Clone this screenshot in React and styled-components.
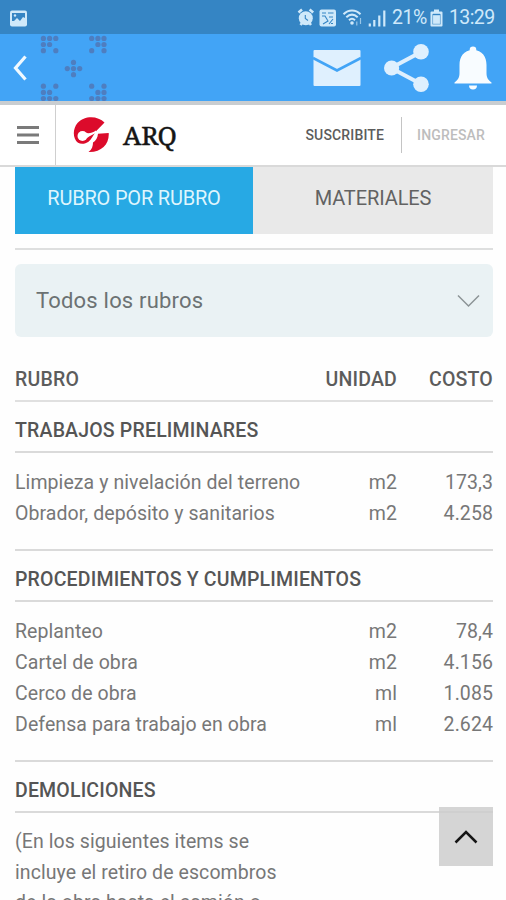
import React from "react";
import styled, { createGlobalStyle } from "styled-components";

const GlobalStyle = createGlobalStyle`
  *, *::before, *::after { box-sizing: border-box; }
  html, body { margin: 0; padding: 0; background: #fefefe; overflow: hidden; }
  body { font-family: Roboto, "Liberation Sans", sans-serif; }
  svg { display: block; flex: none; }
  button { border: 0; padding: 0; background: none; font: inherit; color: inherit; }
`;

const Screen = styled.div`
  position: relative;
  width: 506px;
  height: 900px;
  overflow: hidden;
  display: flex;
  flex-direction: column;
  background: #fefefe;
`;

const StatusBar = styled.div`
  flex: none;
  height: 34px;
  padding: 2px 11px 0 9px;
  display: flex;
  align-items: center;
  justify-content: space-between;
  background: #3585c4;
  color: #cfe9fa;
`;

const StatusGroup = styled.div`
  display: flex;
  align-items: center;
`;

const StatusText = styled.span`
  width: ${(p) => p.$width}px;
  margin-left: ${(p) => p.$gap}px;
  font-size: 19.5px;
  line-height: 30px;
  white-space: nowrap;
  letter-spacing: ${(p) => p.$spacing}px;
`;

const AppBar = styled.header`
  flex: none;
  height: 71px;
  border-bottom: 4px solid #c9cdd0;
  display: flex;
  justify-content: space-between;
  background: #42a4f6;
`;

const AppBarActions = styled.div`
  display: flex;
  align-items: center;
  gap: 23px;
  padding-right: 14px;
`;

const SiteHeader = styled.div`
  flex: none;
  height: 62px;
  padding-right: 21px;
  display: flex;
  align-items: center;
  border-bottom: 2px solid #d9d9d9;
  background: #fff;
`;

const MenuButton = styled.button`
  width: 56px;
  height: 60px;
  padding-left: 17px;
  border-right: 1px solid #cfcfcf;
`;

const Brand = styled.div`
  display: flex;
  align-items: center;
  flex: 1;
  padding-left: 17px;
`;

const BrandName = styled.span`
  margin: -1px 0 0 14px;
  font-family: "Noto Serif", "DejaVu Serif Condensed", "Liberation Serif", serif;
  font-size: 26px;
  font-weight: 400;
  letter-spacing: -0.2px;
  color: #151515;
  -webkit-text-stroke: 0.5px #151515;
`;

const HeaderLink = styled.a`
  font-size: 14px;
  font-weight: 500;
  letter-spacing: 0.15px;
  color: ${(p) => (p.$muted ? "#bdbdbd" : "#5c5c5c")};
`;

const HeaderDivider = styled.span`
  width: 1px;
  height: 36px;
  margin: 0 15px 0 17px;
  background: #c4c4c4;
`;

const Content = styled.main`
  flex: none;
  padding: 0 13px 0 15px;
`;

const Tabs = styled.div`
  display: grid;
  grid-template-columns: 238px 240px;
  height: 67px;
`;

const Tab = styled.button`
  padding-bottom: 5px;
  font-size: 20px;
  letter-spacing: ${(p) => p.$spacing}px;
  text-align: center;
  color: ${(p) => (p.$active ? "#dff5fd" : "#626262")};
  background: ${(p) => (p.$active ? "#27a9e4" : "#e9e9e9")};
`;

const Rule = styled.hr`
  height: 2px;
  margin: 14px 0;
  border: 0;
  background: #dedfdf;
`;

const SelectBox = styled.div`
  height: 73px;
  padding: 0 13px 0 21px;
  border-radius: 6px;
  display: flex;
  align-items: center;
  justify-content: space-between;
  background: #eaf2f4;
  color: #6c7273;
  font-size: 22px;
  letter-spacing: 0.2px;
`;

const Row = styled.div`
  display: grid;
  grid-template-columns: 290px 92px 96px;
  line-height: 31px;
`;

const HeadRow = styled(Row)`
  height: 65px;
  padding-top: 27px;
  border-bottom: 2px solid #e0e0e0;
  font-size: 19.5px;
  font-weight: 500;
  color: #5c5c5c;
  letter-spacing: 0.2px;
`;

const Cell = styled.span`
  white-space: nowrap;
  text-align: ${(p) => (p.$end ? "right" : "left")};
`;

const SectionTitle = styled.h2`
  height: 51px;
  margin: 0;
  padding-top: 13px;
  border-bottom: 2px solid #dadada;
  line-height: 31px;
  font-size: 19.5px;
  font-weight: 500;
  color: #555;
  letter-spacing: 0.18px;
`;

const SectionBody = styled.div`
  padding: 14px 0 20px;
  border-bottom: 2px solid #dadada;
  color: #777;
  font-size: 19.5px;
  letter-spacing: 0.08px;
`;

const Note = styled.p`
  margin: 0;
  padding-top: 14px;
  color: #777;
  font-size: 19.5px;
  line-height: 30.7px;
  letter-spacing: 0.08px;
`;

const NoteLine = styled.span`
  display: block;
`;

const ToTop = styled.button`
  position: absolute;
  right: 13px;
  bottom: 34px;
  width: 54px;
  height: 59px;
  display: flex;
  align-items: center;
  justify-content: center;
  background: rgba(205, 205, 205, 0.84);
`;

const sections = [
  {
    title: "TRABAJOS PRELIMINARES",
    rows: [
      ["Limpieza y nivelación del terreno", "m2", "173,3"],
      ["Obrador, depósito y sanitarios", "m2", "4.258"],
    ],
  },
  {
    title: "PROCEDIMIENTOS Y CUMPLIMIENTOS",
    rows: [
      ["Replanteo", "m2", "78,4"],
      ["Cartel de obra", "m2", "4.156"],
      ["Cerco de obra", "ml", "1.085"],
      ["Defensa para trabajo en obra", "ml", "2.624"],
    ],
  },
];

const dots = [
  [43.4, 38.4], [49.6, 38.4], [55.8, 38.4], [43.4, 44.5], [49.6, 44.5], [43.4, 50.7], [55.8, 50.7],
  [91.7, 38.4], [97.9, 38.4], [104, 38.4], [97.9, 44.5], [104, 44.5], [91.7, 50.7], [104, 50.7],
  [73.5, 62.4], [67.3, 68.6], [73.5, 68.6], [79.7, 68.6], [73.5, 74.7],
  [43.4, 86.2], [55.8, 86.2], [43.4, 92.4], [49.6, 92.4], [43.4, 98.5], [49.6, 98.5], [55.8, 98.5],
  [91.7, 86.2], [104, 86.2], [97.9, 92.4], [104, 92.4], [91.7, 98.5], [97.9, 98.5], [104, 98.5],
];

const GalleryIcon = () => (
  <svg width="19" height="17" viewBox="0 0 19 17">
    <rect x="1" y="0.5" width="17" height="16" rx="2" fill="#cfe9fa" />
    <path d="M3 3H16V8L14 7L11 11L8 8L5 11H3Z" fill="#3585c4" />
    <circle cx="6" cy="5.5" r="1.2" fill="#cfe9fa" />
  </svg>
);

const StatusIcons = () => (
  <svg width="90" height="20" viewBox="297 8 90 20" fill="none" stroke="#cfe9fa">
    <circle cx="305.8" cy="18.2" r="7" fill="#cfe9fa" stroke="none" />
    <path d="M298.5 12.5L302 9.5M309.6 9.5L313.2 12.5M300.5 25L302.5 22.5M311 25L309 22.5" strokeWidth="2.6" />
    <path d="M305.3 15V18.5L308 20.5" stroke="#3585c4" strokeWidth="1.1" />
    <rect x="319.5" y="9.5" width="16.5" height="17" rx="2" fill="#cfe9fa" stroke="none" />
    <path d="M322 13H326M328 13H333.5M322 16H325L328 21L323 24M329 17H333M333 19L329 24M333 23.5H331" stroke="#3585c4" strokeWidth="1.1" />
    <path d="M343.5 14.2C348.5 9.2 355.5 9.2 360.5 14.2M346.3 17.2C350 13.8 354 13.8 357.7 17.2M349 20.2C351 18.3 353 18.3 355 20.2" strokeWidth="2" />
    <circle cx="352" cy="23" r="1.8" fill="#cfe9fa" stroke="none" />
    <path d="M356.8 21.5V25.5M360.5 18V24" strokeWidth="1.2" opacity="0.65" />
    <path d="M369.8 23.5V26.5M374.3 20V26.5M379.3 15.5V26.5M384.3 10.5V26.5" strokeWidth="2.2" />
  </svg>
);

const BatteryIcon = () => (
  <svg width="13" height="18" viewBox="0 0 13 18">
    <path d="M4 0.5H9V2.5H11.5Q12.5 2.5 12.5 3.5V16.5Q12.5 17.5 11.5 17.5H1.5Q0.5 17.5 0.5 16.5V3.5Q0.5 2.5 1.5 2.5H4Z" fill="#cfe9fa" />
    <path d="M3 4.8H10V6.2H3Z" fill="#3585c4" />
    <path d="M2.6 5V15.2H10.4V5" fill="none" stroke="#3585c4" strokeWidth="0.9" opacity="0.6" />
  </svg>
);

const BackAndPattern = () => (
  <svg width="110" height="67" viewBox="0 34 110 67">
    <path d="M25.5 56.5L15.5 68L25.5 79.5" fill="none" stroke="#f0f9ff" strokeWidth="3.2" />
    <g fill="#5a5a8c" opacity="0.5">
      {dots.map(([x, y]) => (
        <circle key={`${x}-${y}`} cx={x} cy={y} r="2.6" />
      ))}
    </g>
  </svg>
);

const MailIcon = () => (
  <svg width="48" height="38" viewBox="0 0 48 38">
    <rect x="0.5" y="1" width="47" height="36" rx="1" fill="#dff0fe" />
    <path d="M0 9L24 21.5L48 9" fill="none" stroke="#42a4f6" strokeWidth="2.8" />
  </svg>
);

const ShareIcon = () => (
  <svg width="47" height="50" viewBox="2 0 47 50">
    <path d="M39 9L9 25L39 41" fill="none" stroke="#dff0fe" strokeWidth="4" />
    <g fill="#dff0fe">
      <circle cx="39" cy="8.8" r="7.8" />
      <circle cx="9.6" cy="25" r="7.6" />
      <circle cx="39" cy="41.2" r="7.8" />
    </g>
  </svg>
);

const BellIcon = () => (
  <svg width="38" height="44" viewBox="0 0 38 44" fill="#f8fcff">
    <circle cx="19" cy="3.8" r="3.3" />
    <path d="M19 4C9.5 4 5.5 11 5.5 19V27C5.5 31.5 4 34 0.5 36.5V37.5H37.5V36.5C34 34 32.5 31.5 32.5 27V19C32.5 11 28.5 4 19 4Z" />
    <path d="M15 39.5H23C23 42 21.5 43.5 19 43.5S15 42 15 39.5Z" />
  </svg>
);

const BrandLogo = () => (
  <svg width="36" height="36" viewBox="73 117 36 36">
    <path
      d="M78 142.8C72.5 138.5 72.5 129 77.5 123C84.500 115 98 115.500 104.500 122.500C101 126.500 97.500 129.500 95.500 132C93 135.500 91.500 139.500 88.500 141.800C85.500 144 81 144.500 78 142.800Z"
      fill="#dc0b2b"
    />
    <circle cx="82.500" cy="136" r="5" fill="#fff" />
    <path d="M85.500 132.600C88.500 134 92 133 96 130.500L96.500 132.500C93.500 134.500 90.500 135.500 87 138Z" fill="#fff" />
    <path d="M98 133.800L108.700 133C109.500 144 101.500 152.500 88.500 152C92 149.500 93 146 93 142.500C96 141 97.500 138 98 133.800Z" fill="#dc0b2b" />
  </svg>
);

export default function App() {
  return (
    <>
      <GlobalStyle />
      <Screen>
        <StatusBar>
          <GalleryIcon />
          <StatusGroup>
            <StatusIcons />
            <StatusText $width={38} $gap={5} $spacing={-0.4}>21%</StatusText>
            <BatteryIcon />
            <StatusText $width={46} $gap={6} $spacing={-0.6}>13:29</StatusText>
          </StatusGroup>
        </StatusBar>

        <AppBar>
          <BackAndPattern />
          <AppBarActions>
            <MailIcon />
            <ShareIcon />
            <BellIcon />
          </AppBarActions>
        </AppBar>

        <SiteHeader>
          <MenuButton aria-label="Menú">
            <svg width="22" height="20" viewBox="0 0 22 20">
              <path d="M0 2.5H22M0 10H22M0 17.5H22" stroke="#7a7a7a" strokeWidth="3.2" />
            </svg>
          </MenuButton>
          <Brand>
            <BrandLogo />
            <BrandName>ARQ</BrandName>
          </Brand>
          <HeaderLink>SUSCRIBITE</HeaderLink>
          <HeaderDivider />
          <HeaderLink $muted>INGRESAR</HeaderLink>
        </SiteHeader>

        <Content>
          <Tabs>
            <Tab $active $spacing={-0.2}>RUBRO POR RUBRO</Tab>
            <Tab $spacing={-0.1}>MATERIALES</Tab>
          </Tabs>
          <Rule />
          <SelectBox>
            Todos los rubros
            <svg width="23" height="14" viewBox="0 0 23 14">
              <path d="M1 1.5L11.5 12L22 1.5" fill="none" stroke="#8c9496" strokeWidth="1.5" />
            </svg>
          </SelectBox>
          <HeadRow>
            <Cell>RUBRO</Cell>
            <Cell $end>UNIDAD</Cell>
            <Cell $end>COSTO</Cell>
          </HeadRow>
          {sections.map((section) => (
            <React.Fragment key={section.title}>
              <SectionTitle>{section.title}</SectionTitle>
              <SectionBody>
                {section.rows.map(([name, unit, cost]) => (
                  <Row key={name}>
                    <Cell>{name}</Cell>
                    <Cell $end>{unit}</Cell>
                    <Cell $end>{cost}</Cell>
                  </Row>
                ))}
              </SectionBody>
            </React.Fragment>
          ))}
          <SectionTitle>DEMOLICIONES</SectionTitle>
          <Note>
            <NoteLine>(En los siguientes items se</NoteLine>
            <NoteLine>incluye el retiro de escombros</NoteLine>
            <NoteLine>de la obra hasta el camión o</NoteLine>
          </Note>
        </Content>

        <ToTop aria-label="Subir">
          <svg width="24" height="14" viewBox="0 0 24 14">
            <path d="M1.5 12.5L12 2L22.5 12.5" fill="none" stroke="#151515" strokeWidth="2.5" />
          </svg>
        </ToTop>
      </Screen>
    </>
  );
}
